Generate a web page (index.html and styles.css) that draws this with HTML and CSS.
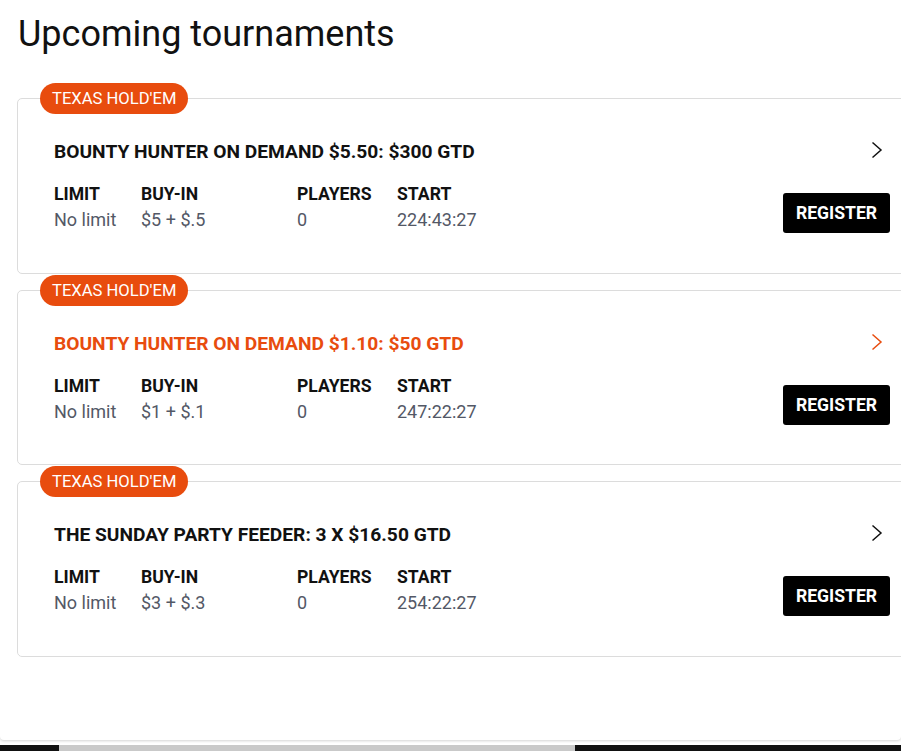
FILE: index.html
```html
<!DOCTYPE html>
<html lang="en">
<head>
<meta charset="utf-8">
<title>Upcoming tournaments</title>
<link rel="stylesheet" href="styles.css">
</head>
<body>
<div class="page">
  <h1 class="heading">Upcoming tournaments</h1>
  <div class="list">
    <div class="card">
      <span class="badge">TEXAS HOLD'EM</span>
      <div class="info">
        <div class="title">BOUNTY HUNTER ON DEMAND $5.50: $300 GTD</div>
        <div class="grid">
          <div class="label">LIMIT</div><div class="label">BUY-IN</div><div class="label">PLAYERS</div><div class="label">START</div>
          <div class="value">No limit</div><div class="value">$5 + $.5</div><div class="value">0</div><div class="value">224:43:27</div>
        </div>
      </div>
      <div class="actions">
        <svg class="chevron" viewBox="0 0 12 18" width="12" height="18"><path d="M1.5 1.5 L10 9 L1.5 16.5" fill="none" stroke="currentColor" stroke-width="1.5"/></svg>
        <button class="register">REGISTER</button>
      </div>
    </div>
    <div class="card active">
      <span class="badge">TEXAS HOLD'EM</span>
      <div class="info">
        <div class="title">BOUNTY HUNTER ON DEMAND $1.10: $50 GTD</div>
        <div class="grid">
          <div class="label">LIMIT</div><div class="label">BUY-IN</div><div class="label">PLAYERS</div><div class="label">START</div>
          <div class="value">No limit</div><div class="value">$1 + $.1</div><div class="value">0</div><div class="value">247:22:27</div>
        </div>
      </div>
      <div class="actions">
        <svg class="chevron" viewBox="0 0 12 18" width="12" height="18"><path d="M1.5 1.5 L10 9 L1.5 16.5" fill="none" stroke="currentColor" stroke-width="1.5"/></svg>
        <button class="register">REGISTER</button>
      </div>
    </div>
    <div class="card">
      <span class="badge">TEXAS HOLD'EM</span>
      <div class="info">
        <div class="title">THE SUNDAY PARTY FEEDER: 3 X $16.50 GTD</div>
        <div class="grid">
          <div class="label">LIMIT</div><div class="label">BUY-IN</div><div class="label">PLAYERS</div><div class="label">START</div>
          <div class="value">No limit</div><div class="value">$3 + $.3</div><div class="value">0</div><div class="value">254:22:27</div>
        </div>
      </div>
      <div class="actions">
        <svg class="chevron" viewBox="0 0 12 18" width="12" height="18"><path d="M1.5 1.5 L10 9 L1.5 16.5" fill="none" stroke="currentColor" stroke-width="1.5"/></svg>
        <button class="register">REGISTER</button>
      </div>
    </div>
  </div>
</div>
<div class="scrollbar"><div class="thumb"></div></div>
</body>
</html>
```

FILE: styles.css
```css
html, body {
  margin: 0;
  padding: 0;
  background: #fff;
  overflow: hidden;
  font-family: Roboto, "Liberation Sans", Arial, sans-serif;
  color: #000;
}

.page {
  height: 740px;
  box-sizing: border-box;
  padding: 13px 0 0 17px;
  border-radius: 0 0 4px 4px;
  box-shadow: 0 1px 3px rgba(0, 0, 0, 0.18);
  overflow: hidden;
}

.heading {
  margin: 0 0 0 1px;
  font-size: 36px;
  font-weight: 400;
  line-height: 42px;
  color: #111;
}

.list {
  margin-top: 43px;
  display: flex;
  flex-direction: column;
  gap: 16px;
  width: 910px;
}

.card {
  position: relative;
  display: flex;
  justify-content: space-between;
  border: 1px solid #dcdcdc;
  border-radius: 5px;
  padding: 41px 36px 39px 36px;
  min-height: 93.6px;
}

.badge {
  position: absolute;
  left: 22px;
  top: -16px;
  height: 31px;
  line-height: 31px;
  padding: 0 12px;
  border-radius: 16px;
  background: #e84c0e;
  color: #fff;
  font-size: 16.6px;
  font-weight: 400;
}

.title {
  font-size: 19.2px;
  font-weight: 700;
  line-height: 24px;
  color: #111;
}

.active .title,
.active .chevron {
  color: #e84c0e;
}

.grid {
  margin-top: 20px;
  display: grid;
  grid-template-columns: 87px 156px 100px auto;
  row-gap: 4px;
}

.label {
  font-size: 17.6px;
  font-weight: 700;
  line-height: 20px;
  color: #111;
}

.value {
  font-size: 18px;
  line-height: 24px;
  color: #535866;
}

.actions {
  display: flex;
  flex-direction: column;
  align-items: flex-end;
}

.chevron {
  display: block;
  margin-top: 1px;
  margin-right: 7px;
  color: #111;
}

.register {
  margin-top: 34px;
  width: 107px;
  height: 40px;
  border: 0;
  border-radius: 3px;
  background: #000;
  color: #fff;
  font-family: Roboto, "Liberation Sans", Arial, sans-serif;
  font-size: 17.6px;
  font-weight: 700;
  padding: 0;
}

.scrollbar {
  margin-top: 5px;
  height: 6px;
  background: #111;
}

.thumb {
  margin-left: 59px;
  width: 516px;
  height: 6px;
  background: #c9c9c9;
}
```
